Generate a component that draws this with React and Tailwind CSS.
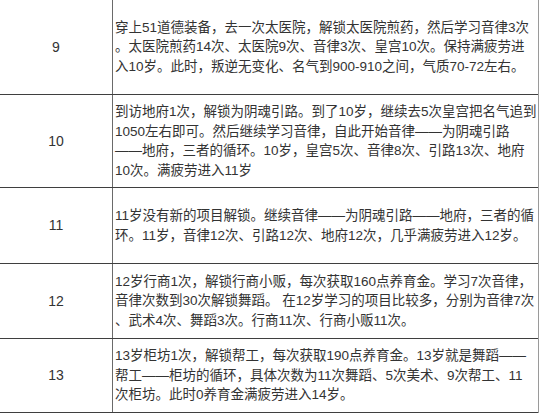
import React from "react";

const rows = [
  {
    n: "9",
    h: "h-[95px]",
    lines: [
      "穿上51道德装备，去一次太医院，解锁太医院煎药，然后学习音律3次",
      "。太医院煎药14次、太医院9次、音律3次、皇宫10次。保持满疲劳进",
      "入10岁。此时，叛逆无变化、名气到900-910之间，气质70-72左右。",
    ],
  },
  {
    n: "10",
    h: "h-[93px]",
    lines: [
      "到访地府1次，解锁为阴魂引路。到了10岁，继续去5次皇宫把名气追到",
      "1050左右即可。然后继续学习音律，自此开始音律——为阴魂引路",
      "——地府，三者的循环。10岁，皇宫5次、音律8次、引路13次、地府",
      "10次。满疲劳进入11岁",
    ],
  },
  {
    n: "11",
    h: "h-[76px]",
    lines: [
      "11岁没有新的项目解锁。继续音律——为阴魂引路——地府，三者的循",
      "环。11岁，音律12次、引路12次、地府12次，几乎满疲劳进入12岁。",
    ],
  },
  {
    n: "12",
    h: "h-[75px]",
    lines: [
      "12岁行商1次，解锁行商小贩，每次获取160点养育金。学习7次音律，",
      "音律次数到30次解锁舞蹈。 在12岁学习的项目比较多，分别为音律7次",
      "、武术4次、舞蹈3次。行商11次、行商小贩11次。",
    ],
  },
  {
    n: "13",
    h: "h-[74px]",
    lines: [
      "13岁柜坊1次，解锁帮工，每次获取190点养育金。13岁就是舞蹈——",
      "帮工——柜坊的循环，具体次数为11次舞蹈、5次美术、9次帮工、11",
      "次柜坊。此时0养育金满疲劳进入14岁。",
    ],
  },
];

export default function App() {
  return (
    <div
      className="w-[540px] h-[414px] bg-white overflow-hidden text-[#333]"
      style={{ fontFamily: '"Liberation Sans", "Noto Sans CJK SC", sans-serif' }}
    >
      <div className="w-[539px] border-r border-[#9a9a9a]">
        {rows.map((r) => (
          <div key={r.n} className={`flex ${r.h} border-b border-[#3f3f3f]`}>
            <div className="w-[113px] shrink-0 border-r border-[#6a6a6a] flex items-center justify-center text-[14px]">
              {r.n}
            </div>
            <div className="flex-1 flex flex-col justify-center pl-[2px] text-[13.5px] leading-[19.5px] whitespace-nowrap">
              {r.lines.map((l, i) => (
                <div key={i}>{l}</div>
              ))}
            </div>
          </div>
        ))}
      </div>
    </div>
  );
}
